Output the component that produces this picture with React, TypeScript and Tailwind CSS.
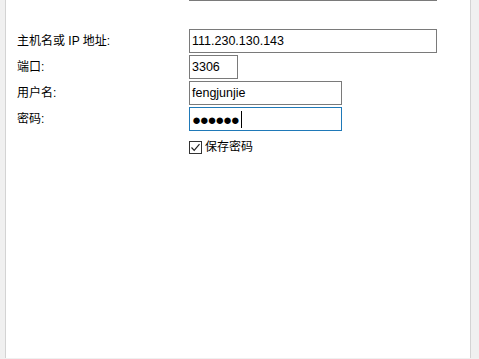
const font = "font-['Liberation_Sans','Noto_Sans_CJK_SC',sans-serif]";

const rows = [
  { label: "主机名或 IP 地址:", value: "111.230.130.143", width: "w-[248px]" },
  { label: "端口:", value: "3306", width: "w-[49px]" },
  { label: "用户名:", value: "fengjunjie", width: "w-[153px]" },
];

export default function App() {
  return (
    <div className={`w-[479px] h-[359px] overflow-hidden bg-[#f0f0f0] ${font} text-[12px] text-black`}>
      <div className="ml-[5px] w-[466px] h-[358px] bg-white border-x border-[#d3d3d3] flex flex-col">
        {/* top field, scrolled mostly out of view */}
        <div className="pl-[183px] -mt-[23px]">
          <div className="w-[248px] h-[24px] border border-[#7a7a7a]" />
        </div>

        <div className="mt-[28px] flex flex-col gap-[2px]">
          {rows.map((row) => (
            <div key={row.label} className="flex items-center h-[24px]">
              <div className="w-[183px] pl-[11px]">{row.label}</div>
              <div
                className={`${row.width} h-[24px] border border-[#7a7a7a] flex items-center px-[2px] text-[12.5px]`}
              >
                {row.value}
              </div>
            </div>
          ))}

          <div className="flex items-center h-[24px]">
            <div className="w-[183px] pl-[11px]">密码:</div>
            <div className="w-[153px] h-[24px] border border-[#1f79b8] flex items-center px-[2px]">
              <span className="text-[15px] leading-none tracking-[-1.3px]">●●●●●●</span>
              <span className="ml-[2px] w-px h-[17px] bg-black" />
            </div>
          </div>
        </div>

        <div className="mt-[7px] pl-[183px] flex items-center gap-[3px]">
          <div className="w-[13px] h-[13px] border border-[#333] flex items-center justify-center">
            <svg width="11" height="11" viewBox="0 0 11 11" fill="none">
              <path d="M1.5 5.5 L4.2 8.3 L9.5 2.2" stroke="#222" strokeWidth="1.2" />
            </svg>
          </div>
          <span>保存密码</span>
        </div>
      </div>
    </div>
  );
}
